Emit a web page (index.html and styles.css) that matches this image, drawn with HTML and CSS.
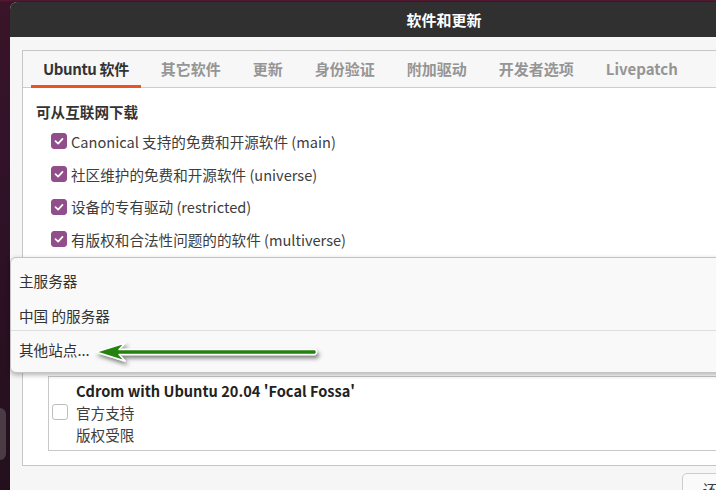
FILE: index.html
```html
<!DOCTYPE html>
<html lang="zh-CN">
<head>
<meta charset="utf-8">
<title>软件和更新</title>
<link rel="stylesheet" href="styles.css">
</head>
<body>
<div class="dock-item"></div>
<div class="window">
  <div class="titlebar">软件和更新</div>
  <div class="content">
    <div class="notebook">
      <div class="tabs">
        <div class="tab active">Ubuntu 软件</div>
        <div class="tab">其它软件</div>
        <div class="tab">更新</div>
        <div class="tab">身份验证</div>
        <div class="tab">附加驱动</div>
        <div class="tab">开发者选项</div>
        <div class="tab">Livepatch</div>
      </div>
      <div class="page">
        <div class="heading">可从互联网下载</div>
        <div class="checks">
          <div class="row"><span class="cb on"><svg viewBox="0 0 16 16"><polyline points="4,8.2 7,11 12,5.5"/></svg></span>Canonical 支持的免费和开源软件 (main)</div>
          <div class="row"><span class="cb on"><svg viewBox="0 0 16 16"><polyline points="4,8.2 7,11 12,5.5"/></svg></span>社区维护的免费和开源软件 (universe)</div>
          <div class="row"><span class="cb on"><svg viewBox="0 0 16 16"><polyline points="4,8.2 7,11 12,5.5"/></svg></span>设备的专有驱动 (restricted)</div>
          <div class="row"><span class="cb on"><svg viewBox="0 0 16 16"><polyline points="4,8.2 7,11 12,5.5"/></svg></span>有版权和合法性问题的的软件 (multiverse)</div>
        </div>
        <div class="covered"></div>
        <div class="listbox">
          <span class="cb"></span>
          <div class="lines">
            <div class="bold">Cdrom with Ubuntu 20.04 'Focal Fossa'</div>
            <div>官方支持</div>
            <div>版权受限</div>
          </div>
        </div>
      </div>
    </div>
    <div class="buttons">
      <button class="btn">还原(V)</button>
      <button class="btn">关闭(C)</button>
    </div>
  </div>
</div>

<div class="menu">
  <div class="item">主服务器</div>
  <div class="item">中国 的服务器</div>
  <div class="sep"></div>
  <div class="item last">其他站点...</div>
</div>

<svg class="arrow" width="240" height="34" viewBox="0 0 240 34">
  <defs>
    <filter id="sh" x="-10%" y="-60%" width="120%" height="220%">
      <feDropShadow dx="2" dy="3" stdDeviation="2" flood-color="#000" flood-opacity="0.5"/>
    </filter>
  </defs>
  <g filter="url(#sh)">
    <path d="M5 14 L34 5 L28 11.5 L224 11.5 Q227 14 224 16.5 L28 16.5 L34 23 Z" fill="#23820c" stroke="#ffffff" stroke-width="1.4" stroke-linejoin="round"/>
  </g>
</svg>
</body>
</html>
```
FILE: styles.css
```css
* { box-sizing: border-box; }

html, body {
  margin: 0;
  width: 716px;
  height: 490px;
  overflow: hidden;
}

body {
  position: relative;
  background: linear-gradient(180deg, #5a1834 0, #3a1428 2px, #33132a 120px, #2b1023 300px, #24101d 490px);
  font-family: "Noto Sans CJK SC", "Noto Sans", sans-serif;
  font-size: 14.6px;
  color: #3d3d3d;
}

.dock-item {
  position: absolute;
  left: -6px;
  top: 408px;
  width: 12px;
  height: 52px;
  border-radius: 6px;
  background: #4a3b44;
}

.window {
  margin: 2px 0 0 10px;
  width: 868px;
  border-radius: 7px 7px 0 0;
  overflow: hidden;
  background: #f6f6f6;
}

.titlebar {
  height: 35px;
  background: #303030;
  color: #ffffff;
  font-weight: bold;
  font-size: 15px;
  display: flex;
  align-items: center;
  justify-content: center;
}

.content {
  padding: 13px 12px 0 12px;
  background: #f6f6f6;
  height: 453px;
}

.notebook {
  border: 1px solid #c6c6c6;
  background: #ffffff;
  height: 416px;
}

.tabs {
  display: flex;
  gap: 8px;
  padding-left: 8px;
  height: 37px;
  background: #f7f7f7;
  border-bottom: 1px solid #cdcdcd;
}

.tab {
  height: 37px;
  padding: 0 12px;
  display: flex;
  align-items: center;
  font-weight: bold;
  font-size: 15px;
  color: #959595;
  border-bottom: 3px solid transparent;
  margin-bottom: -1px;
}

.tab.active {
  color: #333333;
  border-bottom-color: #e95420;
  letter-spacing: -0.4px;
}

.page {
  padding: 14px 0 0 13px;
}

.heading {
  font-weight: bold;
  line-height: 20px;
  color: #333333;
}

.checks {
  margin-top: 3px;
  padding-left: 15px;
}

.row {
  height: 32.7px;
  display: flex;
  align-items: center;
  white-space: nowrap;
}

.cb {
  flex: none;
  width: 16px;
  height: 16px;
  border-radius: 3px;
  border: 1px solid #bdbdbd;
  background: #ffffff;
  margin-right: 4px;
  display: flex;
}

.cb.on {
  background: #924d8b;
  border-color: #924d8b;
}

.cb svg {
  width: 14px;
  height: 14px;
}

.cb polyline {
  fill: none;
  stroke: #ffffff;
  stroke-width: 2;
  stroke-linecap: round;
  stroke-linejoin: round;
}

.covered {
  height: 120px;
}

.listbox {
  margin-left: 12px;
  height: 75px;
  border: 1px solid #c8c8c8;
  background: #ffffff;
  padding: 3px 0 3px 3px;
  display: flex;
  align-items: center;
}

.listbox .cb {
  margin-right: 8px;
  margin-top: -2px;
}

.lines {
  line-height: 22px;
}

.bold {
  font-weight: bold;
  color: #222222;
}

.buttons {
  display: flex;
  justify-content: flex-end;
  gap: 6px;
  margin-top: 7px;
}

.btn {
  width: 89px;
  height: 32px;
  border: 1px solid #cdcdcd;
  border-radius: 5px;
  background: #fafafa;
  font-family: inherit;
  font-size: 14.6px;
  color: #3d3d3d;
}

.menu {
  position: absolute;
  left: 10px;
  top: 257px;
  width: 760px;
  height: 116px;
  background: #f9f9f9;
  border: 1px solid #c4c4c4;
  border-radius: 6px;
  box-shadow: 0 2px 5px rgba(0, 0, 0, 0.3);
  padding-top: 5px;
}

.item {
  height: 35px;
  padding-left: 8px;
  display: flex;
  align-items: center;
  color: #333333;
}

.sep {
  height: 1px;
  background: #dedede;
  margin: -3px 0 0 0;
}

.item.last {
  height: 36px;
}

.arrow {
  position: absolute;
  left: 91px;
  top: 338px;
}
```
